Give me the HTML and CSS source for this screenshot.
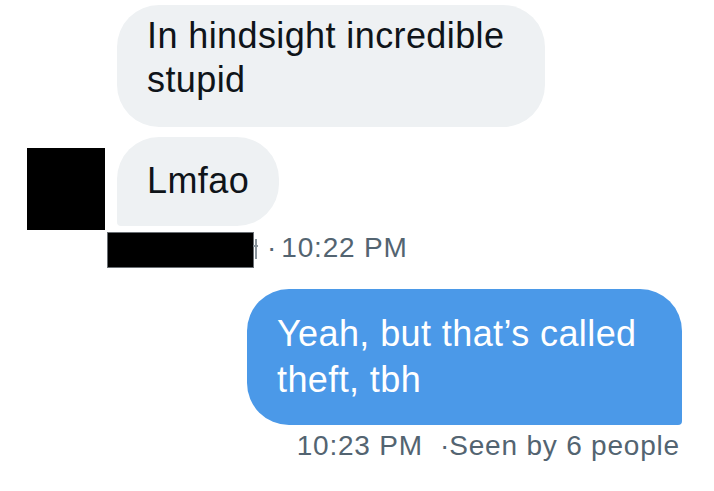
FILE: index.html
```html
<!DOCTYPE html>
<html lang="en">
<head>
<meta charset="utf-8">
<title>Messages</title>
<link rel="stylesheet" href="styles.css">
</head>
<body>
<main class="thread">
  <section class="received">
    <div class="bubble in first">In hindsight incredible stupid</div>
    <div class="avatar"></div>
    <div class="bubble in last">Lmfao</div>
    <div class="meta in-meta">
      <span class="redact"></span><span class="tail"></span>
      <span class="dot">·</span><span class="time">10:22 PM</span>
    </div>
  </section>
  <section class="sent">
    <div class="bubble out">Yeah, but that’s called theft, tbh</div>
    <div class="meta out-meta">
      <span class="time">10:23 PM</span><span class="dot wide">·</span><span>Seen by 6 people</span>
    </div>
  </section>
</main>
</body>
</html>
```
FILE: styles.css
```css
html, body {
  margin: 0;
  padding: 0;
  background: #ffffff;
}
body {
  font-family: "Liberation Sans", Arial, sans-serif;
  color: #0f1419;
}
.thread {
  display: flex;
  flex-direction: column;
  padding-top: 5px;
}
.received {
  display: grid;
  grid-template-columns: 78px auto;
  column-gap: 12px;
  row-gap: 10px;
  padding-left: 27px;
  justify-content: start;
}
.bubble {
  font-size: 36px;
  letter-spacing: 0.4px;
  box-sizing: border-box;
}
.bubble.in {
  background: #eef1f3;
  grid-column: 2;
  justify-self: start;
  max-width: 428px;
  line-height: 44px;
  border-radius: 42px;
}
.bubble.first {
  width: 428px;
  grid-row: 1;
  padding: 9px 30px 25px 30px;
}
.bubble.last {
  grid-row: 2;
  padding: 22px 30px 23px 30px;
  border-bottom-left-radius: 4px;
}
.avatar {
  grid-column: 1;
  grid-row: 2;
  align-self: end;
  width: 78px;
  height: 82px;
  background: #000;
  margin-bottom: -4px;
}
.meta {
  font-size: 28px;
  letter-spacing: 0.8px;
  color: #536471;
  line-height: 30px;
  display: flex;
  align-items: flex-start;
}
.in-meta {
  grid-column: 1 / span 2;
  grid-row: 3;
  margin-top: -3px;
  padding-left: 81px;
}
.redact {
  width: 145px;
  height: 34px;
  background: #000;
  box-shadow: 0 0 0 1px #6a6f74;
}
.tail {
  position: relative;
  width: 6px;
  height: 30px;
}
.tail::before {
  content: "";
  position: absolute;
  left: 2px;
  top: 6px;
  width: 2px;
  height: 20px;
  background: #8a949c;
}
.tail::after {
  content: "";
  position: absolute;
  left: 0;
  top: 12px;
  width: 5px;
  height: 2px;
  background: #8a949c;
}
.dot {
  margin-left: 8px;
  margin-right: 5px;
  letter-spacing: 0;
}
.dot.wide {
  margin-left: 17px;
  margin-right: 0;
}
.sent {
  display: flex;
  flex-direction: column;
  align-items: flex-end;
  padding-right: 32px;
  margin-top: 22px;
}
.bubble.out {
  background: #4b99e8;
  color: #ffffff;
  max-width: 435px;
  width: 435px;
  line-height: 46px;
  padding: 22px 36px 22px 30px;
  border-radius: 42px;
  border-bottom-right-radius: 4px;
}
.out-meta {
  margin-top: 6px;
  margin-right: 2px;
}
```
